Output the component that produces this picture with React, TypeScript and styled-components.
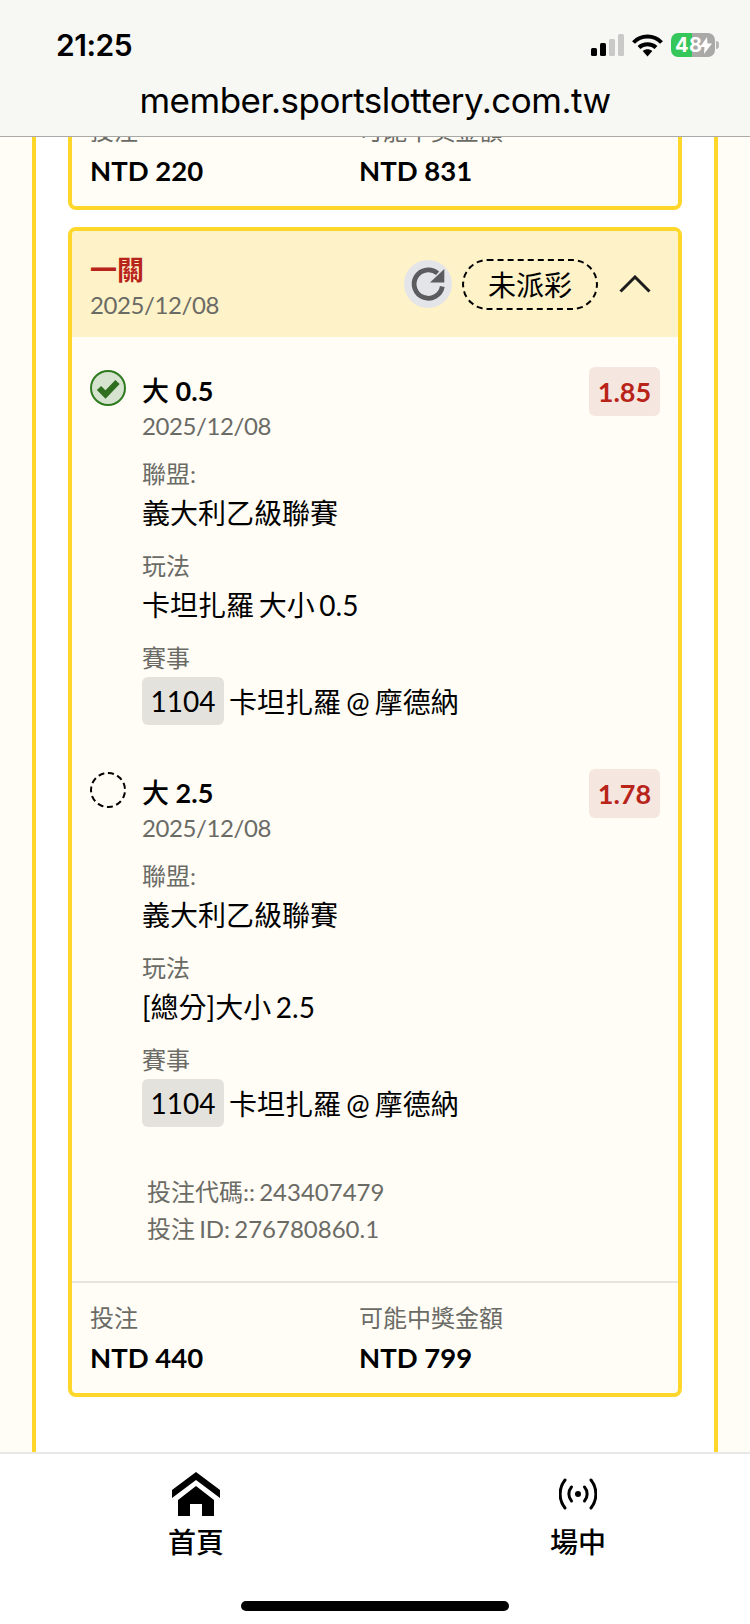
import styled, { createGlobalStyle } from 'styled-components';

const FONT_STACK = "Lato, 'Noto Sans CJK TC', sans-serif";

const GlobalStyle = createGlobalStyle`
  html, body {
    margin: 0;
    padding: 0;
    background: #ffffff;
  }
  * {
    box-sizing: border-box;
  }
`;

const Page = styled.div`
  display: flex;
  flex-direction: column;
  width: 750px;
  height: 1624px;
  overflow: hidden;
  font-family: ${FONT_STACK};
  color: #000000;
`;

const BrowserBar = styled.header`
  flex: 0 0 137px;
  display: flex;
  flex-direction: column;
  position: relative;
  z-index: 1;
  background: #f7f7f4;
  border-bottom: 1px solid #a9a9a7;
`;

const StatusRow = styled.div`
  display: flex;
  align-items: center;
  justify-content: space-between;
  height: 40px;
  margin-top: 25px;
  padding: 0 35px 0 56px;
`;

const Clock = styled.span`
  font-family: Inter, sans-serif;
  font-size: 30px;
  font-weight: 600;
  letter-spacing: -0.5px;
`;

const StatusIcons = styled.div`
  display: flex;
  align-items: center;
  gap: 7px;
`;

const Battery = styled.div`
  position: relative;
  display: flex;
  align-items: center;
  justify-content: flex-start;
  width: 44px;
  height: 24px;
  margin-left: 1px;
  padding-left: 4px;
  border-radius: 7px;
  background: linear-gradient(90deg, #35c759 0 21px, #a9a9a7 21px 44px);
  color: #ffffff;
  font-family: Inter, sans-serif;
  font-size: 20px;
  font-weight: 700;
  letter-spacing: 0.5px;
  &::after {
    content: '';
    position: absolute;
    right: -4px;
    top: 8px;
    width: 3px;
    height: 8px;
    border-radius: 0 3px 3px 0;
    background: #b5b5b3;
  }
`;

const BoltIcon = styled.svg`
  position: absolute;
  right: 3px;
  top: 4px;
`;

const UrlText = styled.div`
  margin-top: 13px;
  text-align: center;
  font-family: Inter, sans-serif;
  font-size: 35px;
  line-height: 44px;
  letter-spacing: -0.5px;
`;

const Scroller = styled.main`
  flex: 1;
  min-height: 0;
  overflow: hidden;
  display: flex;
  justify-content: center;
  background: #fffdf5;
`;

const Frame = styled.div`
  width: 686px;
  display: flex;
  flex-direction: column;
  justify-content: flex-end;
  gap: 17px;
  padding: 0 32px 55px;
  background: #ffffff;
  border-left: 4px solid #ffd62a;
  border-right: 4px solid #ffd62a;
`;

const Card = styled.section`
  flex-shrink: 0;
  background: #fffdf6;
  border: 4px solid #ffd62a;
  border-radius: 8px;
  overflow: hidden;
`;

const CardHeader = styled.div`
  display: flex;
  align-items: center;
  justify-content: space-between;
  height: 106px;
  padding: 0 27px 0 18px;
  background: #fef2c8;
`;

const HeaderText = styled.div`
  padding-top: 6px;
`;

const HeaderTitle = styled.div`
  color: #b8231a;
  font-size: 27px;
  font-weight: 700;
  line-height: 36px;
`;

const DateText = styled.div`
  color: #6b6b66;
  font-size: 24px;
  line-height: 34px;
  letter-spacing: -0.4px;
`;

const HeaderActions = styled.div`
  display: flex;
  align-items: center;
`;

const RefreshButton = styled.div`
  display: flex;
  width: 48px;
  height: 48px;
  border-radius: 50%;
  background: #e4e5e8;
`;

const StatusPill = styled.div`
  display: flex;
  align-items: center;
  justify-content: center;
  width: 136px;
  height: 51px;
  margin-left: 10px;
  border: 2px dashed #000000;
  border-radius: 26px;
  font-size: 28px;
`;

const Chevron = styled.svg`
  margin-left: 21px;
`;

const CardBody = styled.div`
  padding: 30px 18px 34px;
`;

const Leg = styled.div`
  display: grid;
  grid-template-columns: 52px 1fr auto;
  align-items: start;
  margin-bottom: 44px;
`;

const Mark = styled.div<{ $won?: boolean }>`
  width: 36px;
  height: 36px;
  margin-top: 3px;
  border-radius: 50%;
  border: ${(p) => (p.$won ? 'none' : '2px dashed #000000')};
`;

const LegBody = styled.div`
  padding-top: 6px;
`;

const LegTitle = styled.div`
  font-size: 27px;
  font-weight: 700;
  line-height: 35px;
`;

const TitleGlyph = styled.span`
  font-weight: 500;
`;

const LegDate = styled(DateText)`
  line-height: 36px;
`;

const FieldLabel = styled.div`
  margin-top: 14px;
  color: #6b6b66;
  font-size: 24px;
  line-height: 32px;
`;

const FieldValue = styled.div`
  margin-top: 5px;
  font-size: 28px;
  line-height: 36px;
  word-spacing: -2.5px;
  & + ${FieldLabel} {
    margin-top: 19px;
  }
`;

const MatchRow = styled.div`
  display: flex;
  align-items: center;
  gap: 5px;
  margin-top: 3px;
  font-size: 28px;
  word-spacing: -2px;
`;

const MatchNumber = styled.span`
  display: flex;
  align-items: center;
  justify-content: center;
  width: 82px;
  height: 48px;
  border-radius: 6px;
  background: #e4e2dd;
`;

const OddsChip = styled.div`
  display: flex;
  align-items: center;
  justify-content: center;
  width: 71px;
  height: 49px;
  border-radius: 6px;
  background: #f6e6e0;
  color: #b8231a;
  font-size: 27px;
  font-weight: 700;
`;

const BetInfo = styled.div`
  padding: 2px 0 0 57px;
  color: #6b6b66;
  font-size: 24px;
  line-height: 37px;
  word-spacing: -2px;
`;

const CardFooter = styled.div<{ $divided?: boolean }>`
  display: grid;
  grid-template-columns: 269px 1fr;
  padding: 19px 18px 17px;
  border-top: ${(p) => (p.$divided ? '2px solid #e6e4dd' : 'none')};
`;

const FooterLabel = styled.div`
  color: #6b6b66;
  font-size: 24px;
  line-height: 32px;
`;

const FooterValue = styled.div`
  margin-top: 6px;
  font-size: 27.5px;
  font-weight: 700;
  line-height: 36px;
`;

const BottomNav = styled.nav`
  flex: 0 0 172px;
  display: flex;
  flex-direction: column;
  background: #ffffff;
  border-top: 2px solid #e8e8e8;
`;

const NavItems = styled.div`
  display: flex;
  justify-content: space-between;
  padding: 18px 122px 0 146px;
`;

const NavItem = styled.div`
  display: flex;
  flex-direction: column;
  align-items: center;
  width: 100px;
  font-size: 28px;
  font-weight: 500;
`;

const NavIconBox = styled.div`
  display: flex;
  align-items: center;
  justify-content: center;
  height: 44px;
  margin-bottom: 5px;
`;

const HomeIndicator = styled.div`
  align-self: center;
  width: 268px;
  height: 10px;
  margin-top: 40px;
  border-radius: 5px;
  background: #000000;
`;

interface LegData {
  glyph: string;
  line: string;
  odds: string;
  market: string;
  won?: boolean;
}

const legs: LegData[] = [
  { glyph: '大', line: '0.5', odds: '1.85', market: '卡坦扎羅 大小 0.5', won: true },
  { glyph: '大', line: '2.5', odds: '1.78', market: '[總分]大小 2.5' },
];

function SignalIcon() {
  return (
    <svg width="34" height="22" viewBox="0 0 34 22">
      <rect x="0" y="14" width="6" height="8" rx="1.5" fill="#000" />
      <rect x="9" y="9" width="6" height="13" rx="1.5" fill="#000" />
      <rect x="18" y="5" width="6" height="17" rx="1.5" fill="#c9c9c7" />
      <rect x="27" y="0" width="6" height="22" rx="1.5" fill="#c9c9c7" />
    </svg>
  );
}

function WifiIcon() {
  return (
    <svg width="31" height="23" viewBox="0 0 30 23" fill="none" stroke="#000" strokeWidth="4">
      <path d="M1 8.500C8.500 0.500 21.500 0.500 29 8.500" />
      <path d="M6.500 13.500C11 9.300 19 9.300 23.500 13.500" />
      <path d="M15 22.500l-4.800-5.600c2.800-2.200 6.800-2.200 9.600 0z" fill="#000" stroke="none" />
    </svg>
  );
}

function RefreshIcon() {
  return (
    <svg width="48" height="48" viewBox="0 0 48 48" fill="none">
      <path d="M33.600 13.300A14.200 14.200 0 1 0 38.300 26.500" stroke="#5c5c5e" strokeWidth="4.800" />
      <path d="M40.300 9V22.500H26Z" fill="#5c5c5e" />
    </svg>
  );
}

function CheckMark() {
  return (
    <svg width="36" height="36" viewBox="0 0 36 36" fill="none">
      <circle cx="18" cy="18" r="17" fill="#d5e3cf" stroke="#2f7a1f" strokeWidth="2" />
      <path d="M9 18l6.500 6.500L27.500 12" stroke="#2e6e1e" strokeWidth="6" />
    </svg>
  );
}

function HomeIcon() {
  return (
    <svg width="48" height="44" viewBox="0 0 48 44">
      <path d="M24 0L48 18V26L24 8L0 26V18Z" fill="#000" />
      <path d="M24 14L42 28V44H30V32H18V44H6V28Z" fill="#000" />
    </svg>
  );
}

function LiveIcon() {
  return (
    <svg width="38" height="32" viewBox="0 0 38 32" fill="none" stroke="#000" strokeWidth="3" strokeLinecap="round">
      <circle cx="19" cy="16" r="3" fill="#000" stroke="none" />
      <path d="M12.500 9c-3.500 4-3.500 10 0 14" />
      <path d="M25.500 9c3.500 4 3.500 10 0 14" />
      <path d="M6 2c-6.500 8-6.500 20 0 28" />
      <path d="M32 2c6.500 8 6.500 20 0 28" />
    </svg>
  );
}

function BetLeg({ leg }: { leg: LegData }) {
  return (
    <Leg>
      <Mark $won={leg.won}>{leg.won && <CheckMark />}</Mark>
      <LegBody>
        <LegTitle>
          <TitleGlyph>{leg.glyph}</TitleGlyph> {leg.line}
        </LegTitle>
        <LegDate>2025/12/08</LegDate>
        <FieldLabel>聯盟:</FieldLabel>
        <FieldValue>義大利乙級聯賽</FieldValue>
        <FieldLabel>玩法</FieldLabel>
        <FieldValue>{leg.market}</FieldValue>
        <FieldLabel>賽事</FieldLabel>
        <MatchRow>
          <MatchNumber>1104</MatchNumber>
          卡坦扎羅 @ 摩德納
        </MatchRow>
      </LegBody>
      <OddsChip>{leg.odds}</OddsChip>
    </Leg>
  );
}

function Totals({ stake, payout, divided }: { stake: string; payout: string; divided?: boolean }) {
  return (
    <CardFooter $divided={divided}>
      <div>
        <FooterLabel>投注</FooterLabel>
        <FooterValue>{stake}</FooterValue>
      </div>
      <div>
        <FooterLabel>可能中獎金額</FooterLabel>
        <FooterValue>{payout}</FooterValue>
      </div>
    </CardFooter>
  );
}

export default function App() {
  return (
    <Page lang="zh-TW">
      <GlobalStyle />
      <BrowserBar>
        <StatusRow>
          <Clock>21:25</Clock>
          <StatusIcons>
            <SignalIcon />
            <WifiIcon />
            <Battery>
              48
              <BoltIcon width="12" height="17" viewBox="0 0 12 17">
                <path d="M7 0L0 10h4.500L4 17l8-10.500H7.500z" fill="#ffffff" />
              </BoltIcon>
            </Battery>
          </StatusIcons>
        </StatusRow>
        <UrlText>member.sportslottery.com.tw</UrlText>
      </BrowserBar>
      <Scroller>
        <Frame>
          <Card>
            <Totals stake="NTD 220" payout="NTD 831" />
          </Card>
          <Card>
            <CardHeader>
              <HeaderText>
                <HeaderTitle>一關</HeaderTitle>
                <DateText>2025/12/08</DateText>
              </HeaderText>
              <HeaderActions>
                <RefreshButton>
                  <RefreshIcon />
                </RefreshButton>
                <StatusPill>未派彩</StatusPill>
                <Chevron width="32" height="18" viewBox="0 0 32 18" fill="none" stroke="#1c1c1c" strokeWidth="3">
                  <path d="M1.500 16.500L16 2l14.500 14.500" />
                </Chevron>
              </HeaderActions>
            </CardHeader>
            <CardBody>
              {legs.map((leg) => (
                <BetLeg key={leg.line} leg={leg} />
              ))}
              <BetInfo>
                <div>投注代碼:: 243407479</div>
                <div>投注 ID: 276780860.1</div>
              </BetInfo>
            </CardBody>
            <Totals stake="NTD 440" payout="NTD 799" divided />
          </Card>
        </Frame>
      </Scroller>
      <BottomNav>
        <NavItems>
          <NavItem>
            <NavIconBox>
              <HomeIcon />
            </NavIconBox>
            首頁
          </NavItem>
          <NavItem>
            <NavIconBox>
              <LiveIcon />
            </NavIconBox>
            場中
          </NavItem>
        </NavItems>
        <HomeIndicator />
      </BottomNav>
    </Page>
  );
}
